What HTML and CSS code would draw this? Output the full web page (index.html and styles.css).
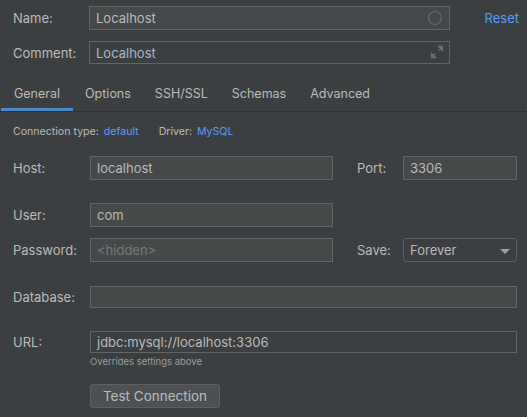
FILE: index.html
```html
<!DOCTYPE html>
<html>
<head>
<meta charset="utf-8">
<link rel="stylesheet" href="styles.css">
</head>
<body>
<div class="dialog">
  <div class="top">
    <label class="lbl">Name:</label>
    <div class="field filled name-field">
      <span class="val">Localhost</span>
      <svg class="circle-ic" width="16" height="16" viewBox="0 0 16 16"><circle cx="8" cy="8" r="6.5" fill="none" stroke="#66696b" stroke-width="1.2"/></svg>
    </div>
    <a class="reset">Reset</a>
    <label class="lbl">Comment:</label>
    <div class="field plain comment-field">
      <span class="val comment">Localhost</span>
      <svg class="expand-ic" width="14" height="14" viewBox="0 0 14 14">
        <path d="M8.5 1.5h4v4z M12 2l-3.5 3.5" fill="#6b6e70" stroke="#6b6e70" stroke-width="1.3"/>
        <path d="M1.5 8.5v4h4z M2 12l3.5-3.5" fill="#6b6e70" stroke="#6b6e70" stroke-width="1.3"/>
      </svg>
    </div>
  </div>

  <div class="tabs">
    <div class="tab active">General</div>
    <div class="tab">Options</div>
    <div class="tab">SSH/SSL</div>
    <div class="tab">Schemas</div>
    <div class="tab">Advanced</div>
  </div>

  <div class="info">
    <span>Connection type:</span><span class="link">default</span>
    <span class="sp">Driver:</span><span class="link">MySQL</span>
  </div>

  <div class="form">
    <div class="row r-host">
      <label class="lbl">Host:</label>
      <div class="field filled w-mid"><span class="val">localhost</span></div>
      <label class="lbl lbl2">Port:</label>
      <div class="field filled w-small"><span class="val">3306</span></div>
    </div>
    <div class="row r-user">
      <label class="lbl">User:</label>
      <div class="field filled w-mid"><span class="val">com</span></div>
    </div>
    <div class="row r-pass">
      <label class="lbl">Password:</label>
      <div class="field filled w-mid"><span class="val ph">&lt;hidden&gt;</span></div>
      <label class="lbl lbl2">Save:</label>
      <div class="field select w-small"><span class="val">Forever</span><span class="arrow"></span></div>
    </div>
    <div class="row r-db">
      <label class="lbl">Database:</label>
      <div class="field filled w-full short"></div>
    </div>
    <div class="row r-url">
      <label class="lbl">URL:</label>
      <div class="field plain w-full short"><span class="val">jdbc:mysql://localhost:3306</span></div>
    </div>
    <div class="hint">Overrides settings above</div>
    <div class="btn-row"><button class="btn">Test Connection</button></div>
  </div>
</div>
</body>
</html>
```
FILE: styles.css
```css
* { box-sizing: border-box; }
html, body {
  margin: 0;
  padding: 0;
  background: #3c3f41;
  width: 527px;
  height: 417px;
  overflow: hidden;
}
body {
  font-family: Inter, "Liberation Sans", Arial, sans-serif;
  font-size: 13px;
  color: #bbbbbb;
}
.dialog { display: flex; flex-direction: column; }

.top {
  display: grid;
  grid-template-columns: 76px 361px 1fr;
  grid-template-rows: 24px 23px;
  row-gap: 11px;
  padding: 6px 8px 0 13px;
  align-items: center;
}
.lbl { color: #bbbbbb; white-space: nowrap; }
.field {
  height: 24px;
  border: 1px solid #646464;
  display: flex;
  align-items: center;
  padding: 0 6px;
  position: relative;
}
.filled { background: #45494a; }
.plain { background: #3c3f41; }
.name-field, .comment-field { height: 100%; }
.val { color: #bbbbbb; white-space: nowrap; }
.comment { color: #a9b7c6; }
.circle-ic { position: absolute; right: 6px; top: 3px; }
.expand-ic { position: absolute; right: 5px; top: 3px; }
.reset {
  color: #589df6;
  justify-self: end;
}

.tabs {
  display: flex;
  margin-top: 15px;
  padding-left: 1px;
  height: 33px;
  border-bottom: 1px solid #323232;
}
.tab {
  padding: 0 12px;
  font-size: 12.5px;
  line-height: 30px;
  color: #bbbbbb;
  border-bottom: 3px solid transparent;
}
.tab.active { border-bottom-color: #4a88c7; padding: 0 13px; }

.info {
  font-size: 10.6px;
  padding: 13px 0 0 13px;
  height: 27px;
  display: flex;
  gap: 5px;
  color: #bbbbbb;
}
.info .link { color: #589df6; }
.info .sp { margin-left: 15px; }

.form {
  display: flex;
  flex-direction: column;
  padding: 0 10px 0 13px;
}
.row {
  display: grid;
  grid-template-columns: 77px 243px 24px 46px 114px;
  align-items: center;
}
.row .lbl { grid-column: 1; }
.row .lbl2 { grid-column: 4; }
.row .w-mid { grid-column: 2; }
.row .w-small { grid-column: 5; height: 24px; }
.row .w-full { grid-column: 2 / 6; }
.short { height: 22px; }
.r-host { margin-top: 17px; }
.r-user { margin-top: 23px; }
.r-pass { margin-top: 11px; }
.r-db { margin-top: 24px; }
.r-url { margin-top: 23px; }
.ph { color: #787878; }
.select {
  background: #3c3f41;
  border-radius: 3px;
  border-color: #5e6163;
}
.arrow {
  position: absolute;
  right: 6px;
  top: 10px;
  width: 0;
  height: 0;
  border-left: 5px solid transparent;
  border-right: 5px solid transparent;
  border-top: 5px solid #a0a0a0;
}
.hint {
  margin-left: 77px;
  font-size: 9.5px;
  color: #9a9a9a;
  margin-top: 3px;
}
.btn-row { margin-left: 77px; margin-top: 17px; }
.btn {
  font-family: inherit;
  font-size: 13.5px;
  color: #bbbbbb;
  background: #4c5052;
  border: 1px solid #5e6060;
  border-radius: 3px;
  width: 130px;
  height: 24px;
  padding: 0;
}
```
